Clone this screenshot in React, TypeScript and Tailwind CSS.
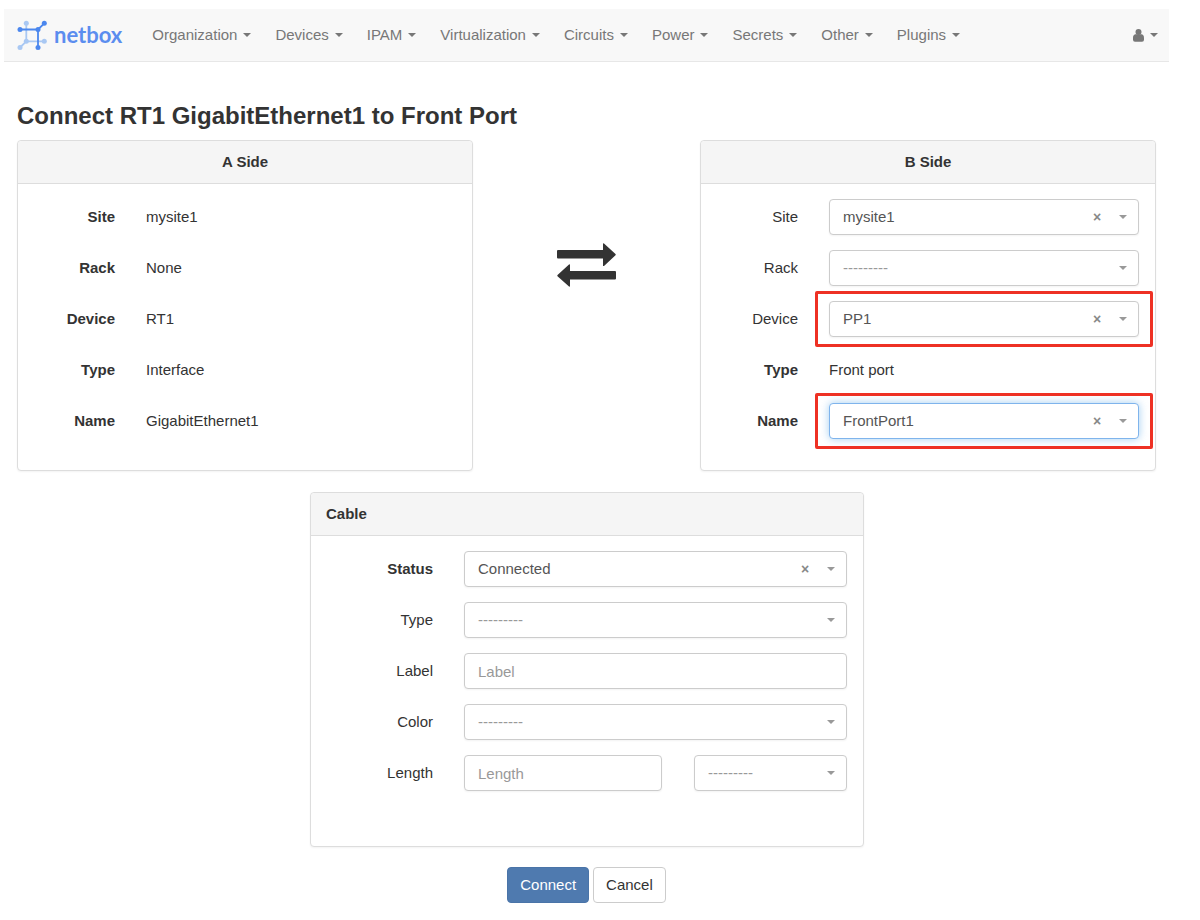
import { useState } from 'react';
import type { ReactNode } from 'react';
import clsx from 'clsx';

const menus = [
  'Organization',
  'Devices',
  'IPAM',
  'Virtualization',
  'Circuits',
  'Power',
  'Secrets',
  'Other',
  'Plugins',
];

const aSide = [
  ['Site', 'mysite1'],
  ['Rack', 'None'],
  ['Device', 'RT1'],
  ['Type', 'Interface'],
  ['Name', 'GigabitEthernet1'],
];

const EMPTY = '---------';

const Caret = ({ className }: { className?: string }) => (
  <svg className={clsx('h-1 w-2 shrink-0', className)} viewBox="0 0 8 4" fill="currentColor" aria-hidden="true">
    <path d="M0 0h8L4 4z" />
  </svg>
);

const Logo = () => (
  <a href="#" className="flex items-center gap-[6px]">
    <svg width="31" height="31" viewBox="0 0 31 31" strokeWidth="1.8" aria-hidden="true">
      <g stroke="#a9c8f3" fill="#a9c8f3">
        <path d="M9.3 3.3v18h18M9.3 21.3L3 27.5" fill="none" />
        <g stroke="none">
          <circle cx="9.3" cy="3.3" r="2.5" />
          <circle cx="9.3" cy="21.3" r="2.5" />
          <circle cx="27.3" cy="21.3" r="2.5" />
          <circle cx="3" cy="27.5" r="2.5" />
        </g>
      </g>
      <g stroke="#4b87ee" fill="#4b87ee">
        <path d="M3 9.5h18v18M21 9.5l6.3-6.2" fill="none" />
        <g stroke="none">
          <circle cx="3" cy="9.5" r="2.5" />
          <circle cx="21" cy="9.5" r="2.5" />
          <circle cx="27.3" cy="3.3" r="2.5" />
          <circle cx="21" cy="27.5" r="2.5" />
        </g>
      </g>
    </svg>
    <span className="font-[Lato,sans-serif] text-[22px] leading-6 font-bold text-[#5b8def]">netbox</span>
  </a>
);

const Navbar = () => (
  <nav className="flex h-[53px] items-center border-b border-[#e7e7e7] bg-[#f8f8f8] pr-[11px] pl-[13px] text-[#777]">
    <Logo />
    <div className="ml-[30px] flex flex-1 items-center gap-6">
      {menus.map((m) => (
        <button key={m} type="button" className="flex items-center gap-[6px]">
          {m}
          <Caret />
        </button>
      ))}
    </div>
    <button type="button" aria-label="User menu" className="flex items-center gap-[6px]">
      <svg width="11" height="13" viewBox="0 0 11 13" fill="currentColor" aria-hidden="true">
        <circle cx="5.5" cy="3" r="3" />
        <path d="M2.2 5.300h6.600q2.200.5 2.200 3.700v1.800q0 2-2 2h-7q-2 0-2-2V9q0-3.200 2.200-3.700z" />
      </svg>
      <Caret />
    </button>
  </nav>
);

type PanelProps = { title: string; centered?: boolean; className?: string; children: ReactNode };

const Panel = ({ title, centered, className, children }: PanelProps) => (
  <section className="rounded border border-[#ddd] bg-white shadow-xs">
    <h2
      className={clsx(
        'rounded-t border-b border-[#ddd] bg-[#f5f5f5] px-[15px] py-[11px] leading-5 font-bold',
        centered && 'text-center'
      )}
    >
      {title}
    </h2>
    <div className={clsx('px-4 pt-[15px]', className)}>{children}</div>
  </section>
);

const sideRow = 'mb-[15px] grid min-h-9 grid-cols-[81fr_310fr] items-center gap-x-[31px]';
const cableRow = 'mb-[15px] grid min-h-9 grid-cols-[106fr_383fr] items-center gap-x-[31px]';
const field = 'h-9 w-full rounded border border-[#ccc] bg-white pl-[13px] shadow-xs outline-none';

type SelectProps = { id: string; value?: string; label?: string; focused?: boolean; marked?: boolean };

const Select = ({ id, value = '', label, focused, marked }: SelectProps) => {
  const [current, setCurrent] = useState(value);

  return (
    <div className="relative">
      <select
        id={id}
        aria-label={label}
        value={current}
        onChange={(e) => setCurrent(e.target.value)}
        className={clsx(
          'h-9 w-full appearance-none rounded border bg-white pr-14 pl-[13px] outline-none',
          current ? 'text-[#555]' : 'text-[#999]',
          focused ? 'border-[#7fb4ec] shadow-[0_0_8px_rgba(102,175,233,0.6)]' : 'border-[#ccc] shadow-xs'
        )}
      >
        <option value="">{EMPTY}</option>
        {value && <option value={value}>{value}</option>}
      </select>
      {current && (
        <button
          type="button"
          aria-label="Clear"
          onClick={() => setCurrent('')}
          className="absolute top-2 right-9 flex h-5 w-3 items-center justify-center text-sm font-bold text-[#888]"
        >
          ×
        </button>
      )}
      <Caret className="pointer-events-none absolute top-4 right-3 text-[#999]" />
      {/* highlight frame */}
      {marked && (
        <div className="pointer-events-none absolute -inset-x-[14px] -inset-y-[10px] rounded-xs border-[3px] border-[#ee3124]" />
      )}
    </div>
  );
};

type RowProps = { id: string; name: string; bold?: boolean; row: string; children: ReactNode };

const Row = ({ id, name, bold, row, children }: RowProps) => (
  <div className={row}>
    <label htmlFor={id} className={clsx('text-right', bold && 'font-bold')}>
      {name}
    </label>
    {children}
  </div>
);

export default function App() {
  return (
    <div className="mr-[31px] ml-1 pt-[9px] font-['Liberation_Sans',Arial,sans-serif] text-[15px] leading-5 text-[#333]">
      <Navbar />

      <form className="px-[13px]" onSubmit={(e) => e.preventDefault()}>
        <h1 className="mt-10 mb-[10px] text-2xl leading-7 font-semibold">
          Connect RT1 GigabitEthernet1 to Front Port
        </h1>

        <div className="grid grid-cols-[456fr_227fr_456fr]">
          <Panel title="A Side" centered className="pb-4">
            <dl>
              {aSide.map(([name, value]) => (
                <div key={name} className={sideRow}>
                  <dt className="text-right font-bold">{name}</dt>
                  <dd>{value}</dd>
                </div>
              ))}
            </dl>
          </Panel>

          <div className="flex items-start justify-center pt-[103px]">
            <svg width="59" height="44" viewBox="0 0 59 44" fill="#333" aria-hidden="true">
              <path d="M1 7h45V1q0-1 1-.6L58.500 11q.5.6 0 1.200L47 23q-1 .4-1-.6v-7H1q-1 0-1-1V8q0-1 1-1z" />
              <path d="M58 28H13v-6q0-1-1-.6L.5 32q-.5.6 0 1.200L12 43.600q1 .4 1-.6v-6.600h45q1 0 1-1V29q0-1-1-1z" />
            </svg>
          </div>

          <Panel title="B Side" centered className="pb-4">
            <Row id="b-site" name="Site" row={sideRow}>
              <Select id="b-site" value="mysite1" />
            </Row>
            <Row id="b-rack" name="Rack" row={sideRow}>
              <Select id="b-rack" />
            </Row>
            <Row id="b-device" name="Device" row={sideRow}>
              <Select id="b-device" value="PP1" marked />
            </Row>
            <div className={sideRow}>
              <span className="text-right font-bold">Type</span>
              <span>Front port</span>
            </div>
            <Row id="b-name" name="Name" bold row={sideRow}>
              <Select id="b-name" value="FrontPort1" focused marked />
            </Row>
          </Panel>
        </div>

        <div className="mt-[21px] grid grid-cols-[293fr_554fr_292fr]">
          <div className="col-start-2">
            <Panel title="Cable" className="pb-10">
              <Row id="status" name="Status" bold row={cableRow}>
                <Select id="status" value="Connected" />
              </Row>
              <Row id="type" name="Type" row={cableRow}>
                <Select id="type" />
              </Row>
              <Row id="label" name="Label" row={cableRow}>
                <input id="label" type="text" placeholder="Label" className={clsx(field, 'placeholder:text-[#999]')} />
              </Row>
              <Row id="color" name="Color" row={cableRow}>
                <Select id="color" />
              </Row>
              <Row id="length" name="Length" row={cableRow}>
                <div className="grid grid-cols-[198fr_153fr] gap-8">
                  <input id="length" type="text" placeholder="Length" className={clsx(field, 'placeholder:text-[#999]')} />
                  <Select id="length-unit" label="Length unit" />
                </div>
              </Row>
            </Panel>
          </div>
        </div>

        <div className="mt-5 flex justify-center gap-1">
          <button type="submit" className="h-9 rounded border border-[#4a74a8] bg-[#4f7aaf] px-3 text-white">
            Connect
          </button>
          <a href="#" className="flex h-9 items-center rounded border border-[#ccc] bg-white px-3">
            Cancel
          </a>
        </div>
      </form>
    </div>
  );
}
